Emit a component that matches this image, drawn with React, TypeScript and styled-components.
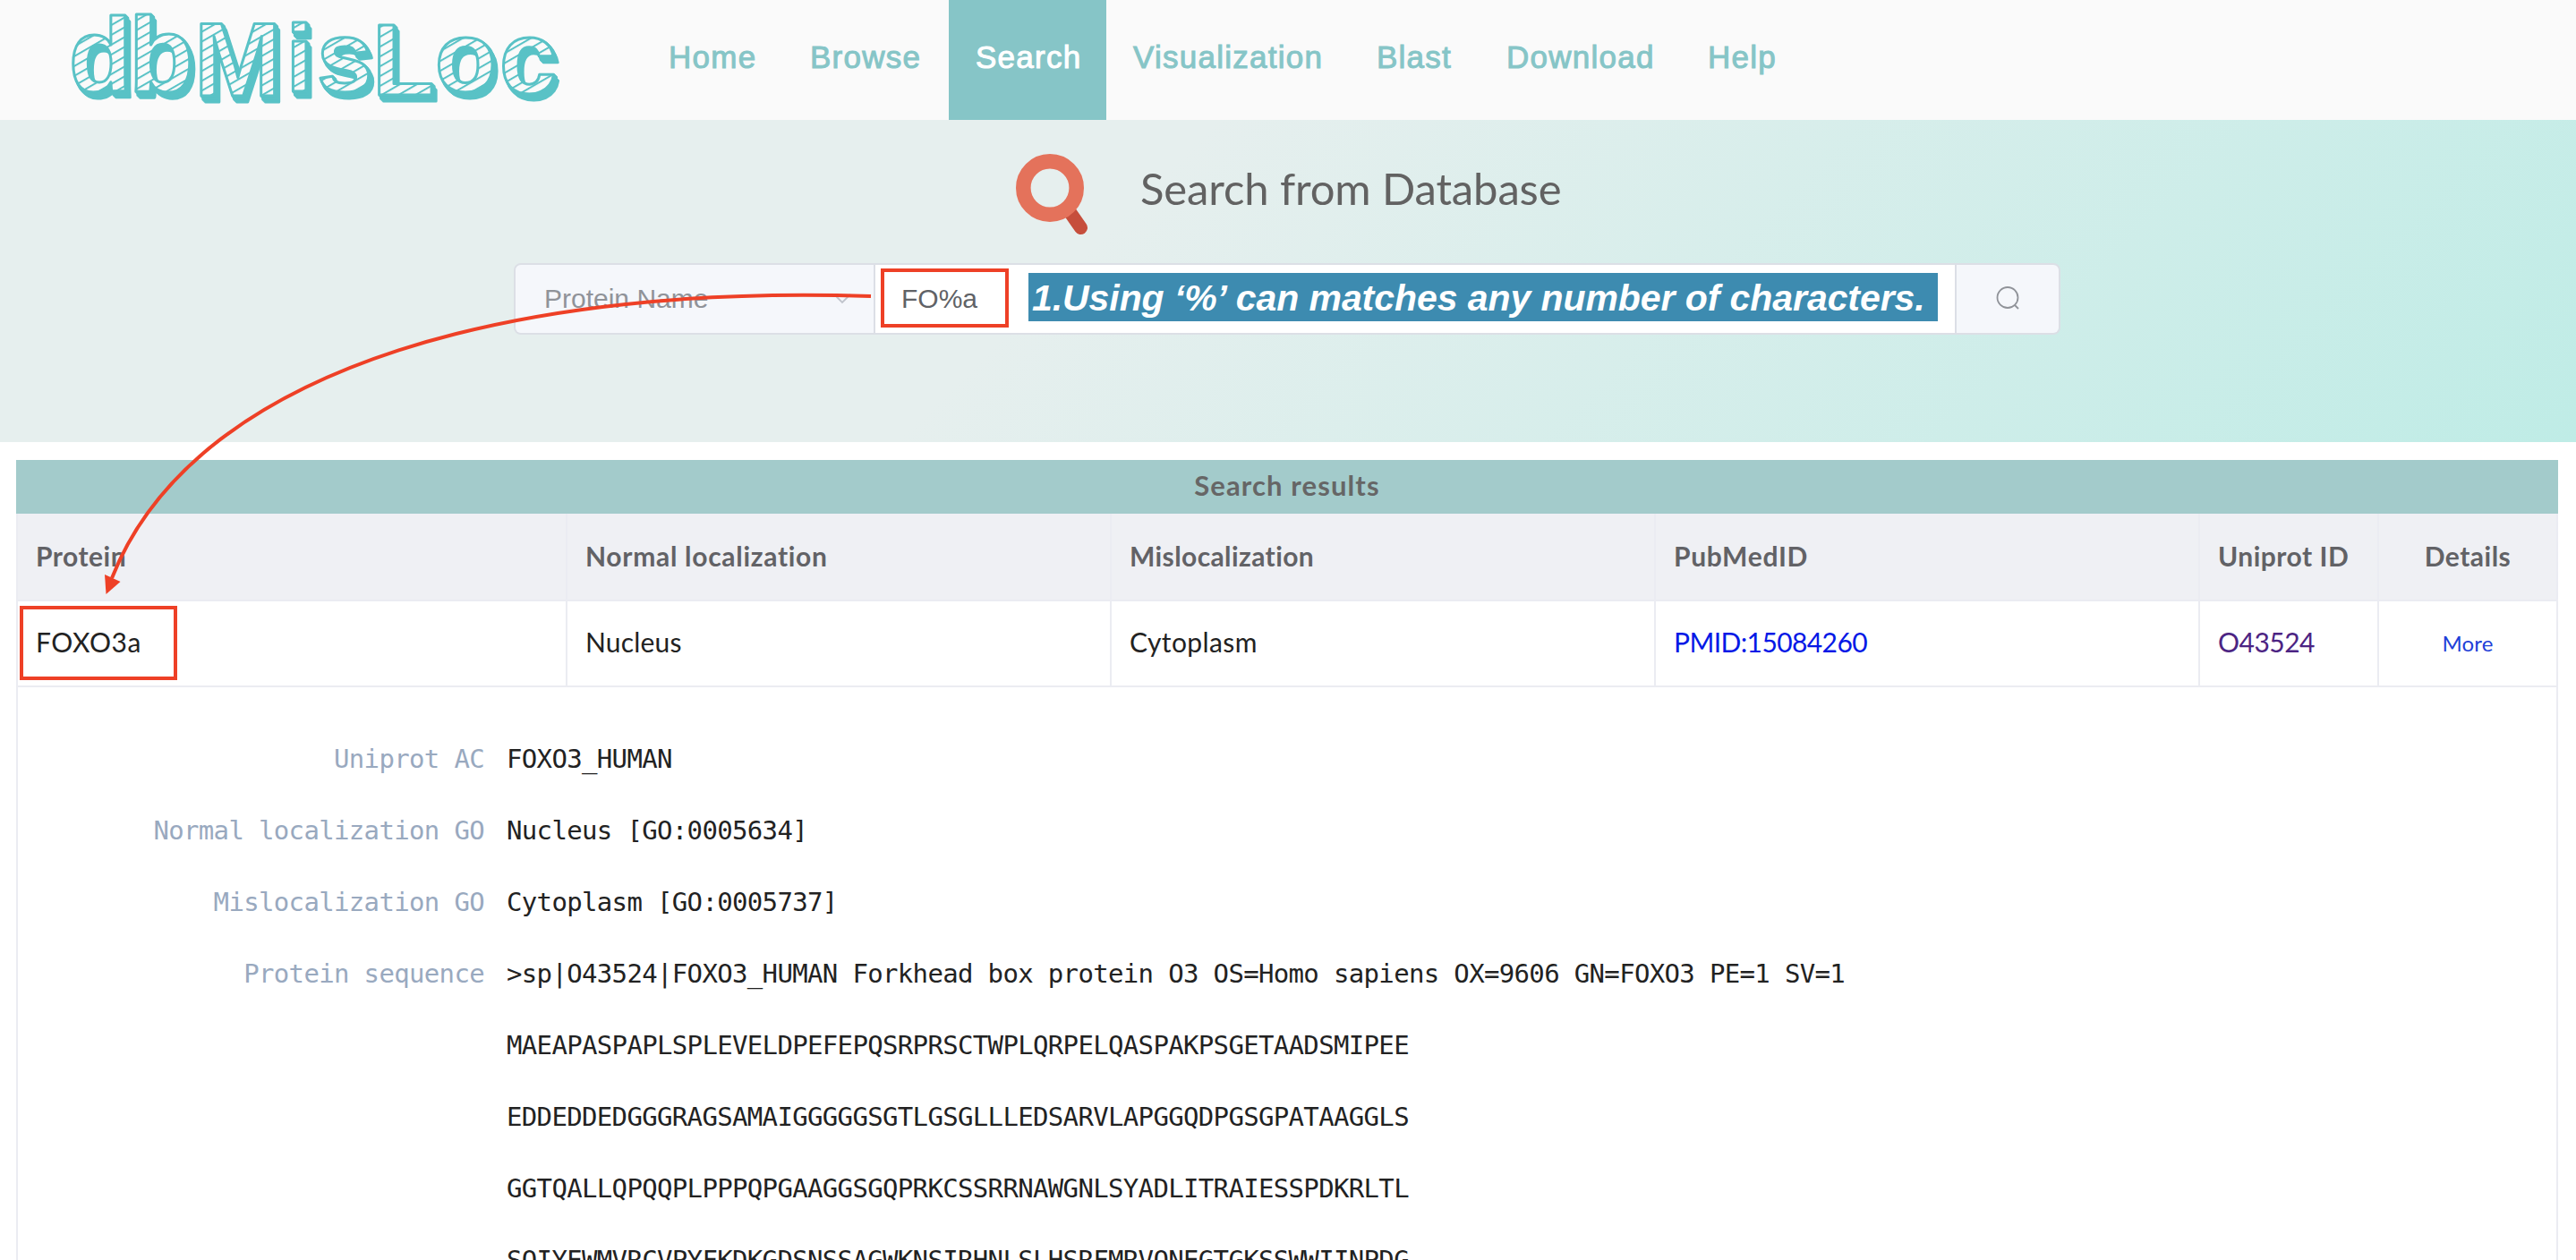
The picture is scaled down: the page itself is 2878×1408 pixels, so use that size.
import React from "react";
import styled, { createGlobalStyle } from "styled-components";

const RED = "#ee4026";
const TEAL = "#59c2c6";
const HUMANIST = 'Lato, "Noto Sans", sans-serif';
const GROTESK = '"Liberation Sans", Arial, sans-serif';
const MONO = '"DejaVu Sans Mono", "Liberation Mono", monospace';

const GlobalStyle = createGlobalStyle`
  * { box-sizing: border-box; }
  html, body { margin: 0; padding: 0; background: #fff; }
  body { overflow: hidden; height: 1408px; }
`;

const Page = styled.div`
  position: relative;
  width: 2878px;
  height: 1408px;
  overflow: hidden;
  font-family: ${HUMANIST};
  background: #fff;
`;

const Header = styled.header`
  display: flex;
  height: 134px;
  background: #fafafa;
`;

const LogoArt = styled.svg`
  display: block;
  flex: none;
  width: 717px;
  height: 134px;
`;

const LogoText = styled.text`
  font-family: ${GROTESK};
  font-weight: 700;
  stroke-linejoin: round;
  filter: drop-shadow(1px 1px 0 ${TEAL}) drop-shadow(2px 2px 0 ${TEAL}) drop-shadow(2px 4px 0 ${TEAL});
`;

const Nav = styled.nav`
  display: flex;
`;

const NavItem = styled.a<{ $width: number; $active?: boolean }>`
  width: ${(p) => p.$width}px;
  height: 134px;
  padding-left: 30px;
  font-family: ${GROTESK};
  font-size: 35px;
  line-height: 128px;
  letter-spacing: 1.25px;
  white-space: nowrap;
  color: ${(p) => (p.$active ? "#fff" : "#86c5c7")};
  background: ${(p) => (p.$active ? "#86c5c7" : "transparent")};
  -webkit-text-stroke: 1px currentColor;
`;

const Hero = styled.section`
  display: flex;
  flex-direction: column;
  align-items: center;
  height: 360px;
  background: linear-gradient(135deg, #e6efee 0%, #e6efee 42%, #bfece6 100%);
`;

const HeroTitle = styled.div`
  display: flex;
  align-items: center;
  width: 608px;
  height: 160px;
`;

const Lens = styled.svg`
  flex: none;
  width: 90px;
  height: 100px;
  margin: 4px 49px 4px 0;
`;

const Title = styled.h1`
  margin: 0 0 8px;
  font-size: 49px;
  font-weight: 400;
  line-height: 60px;
  letter-spacing: -0.12px;
  white-space: nowrap;
  color: #626262;
`;

const SearchBar = styled.div`
  display: flex;
  width: 1728px;
  height: 80px;
  margin-right: 2px;
  border: 2px solid #dcdfe6;
  border-radius: 8px;
  overflow: hidden;
  font-family: ${GROTESK};
  font-size: 30px;
  line-height: 75px;
`;

const Select = styled.div`
  display: flex;
  justify-content: space-between;
  width: 402px;
  padding: 0 25px 0 32px;
  border-right: 2px solid #dcdfe6;
  background: #f5f7fb;
  color: #909399;
`;

const Chevron = styled.svg`
  width: 20px;
  height: 12px;
  margin-top: 32px;
`;

const Field = styled.div`
  display: flex;
  align-items: flex-start;
  flex: 1;
  padding-left: 29px;
  background: #fff;
  color: #606266;
`;

const Query = styled.span`
  width: 142px;
`;

const Hint = styled.span`
  width: 1016px;
  height: 54px;
  margin-top: 9px;
  padding-left: 4px;
  font-size: 41px;
  font-weight: 700;
  font-style: italic;
  line-height: 56px;
  letter-spacing: -0.07px;
  white-space: nowrap;
  color: #fff;
  background: #3d8bb0;
`;

const SearchButton = styled.div`
  display: flex;
  align-items: center;
  justify-content: center;
  width: 116px;
  border-left: 2px solid #dcdfe6;
  background: #f5f7fb;
`;

const Results = styled.section`
  margin: 20px 20px 0 18px;
`;

const Caption = styled.div`
  height: 60px;
  font-size: 31px;
  font-weight: 700;
  line-height: 57px;
  letter-spacing: 1.1px;
  text-align: center;
  color: #666;
  background: #a3cbcb;
`;

const Row = styled.div<{ $head?: boolean }>`
  display: grid;
  grid-template-columns: 614px 608px 608px 608px 200px 200px;
  height: ${(p) => (p.$head ? 98 : 96)}px;
  border-left: 2px solid #ebecf2;
  background: ${(p) => (p.$head ? "#eff0f4" : "#fff")};
  color: ${(p) => (p.$head ? "#626266" : "#222")};
  font-weight: ${(p) => (p.$head ? 700 : 400)};
  line-height: ${(p) => (p.$head ? 95 : 90)}px;
`;

const Cell = styled.div<{ $center?: boolean; $small?: boolean; $color?: string; $spacing?: number }>`
  padding-left: ${(p) => (p.$center ? 0 : 20)}px;
  text-align: ${(p) => (p.$center ? "center" : "left")};
  border-right: 2px solid #ebecf2;
  border-bottom: 2px solid #ebecf2;
  font-size: ${(p) => (p.$small ? 24 : 30)}px;
  ${(p) => p.$small && "line-height: 94px;"}
  letter-spacing: ${(p) => p.$spacing ?? 0.5}px;
  white-space: nowrap;
  color: ${(p) => p.$color ?? "inherit"};
`;

const Details = styled.div`
  height: 640px;
  padding-top: 40px;
  border: solid #ebecf2;
  border-width: 0 2px;
  font-family: ${MONO};
  font-size: 29px;
  line-height: 80px;
  letter-spacing: -0.66px;
  white-space: pre;
`;

const DetailItem = styled.div`
  display: flex;
  gap: 25px;
`;

const Label = styled.div`
  width: 521px;
  text-align: right;
  color: #99a9bf;
`;

const Value = styled.div`
  color: #222;
`;

const Mark = styled.div<{ $x: number; $y: number; $w: number; $h: number }>`
  position: absolute;
  left: ${(p) => p.$x}px;
  top: ${(p) => p.$y}px;
  width: ${(p) => p.$w}px;
  height: ${(p) => p.$h}px;
  border: 4px solid ${RED};
`;

const ArrowLayer = styled.svg`
  position: absolute;
  left: 0;
  top: 0;
  width: 1000px;
  height: 700px;
  pointer-events: none;
`;

const navItems = [
  { label: "Home", width: 158 },
  { label: "Browse", width: 185 },
  { label: "Search", width: 176, active: true },
  { label: "Visualization", width: 272 },
  { label: "Blast", width: 145 },
  { label: "Download", width: 225 },
  { label: "Help", width: 140 },
];

const logoLetters = [
  { ch: "d", x: 77, y: 102, size: 116 },
  { ch: "b", x: 144, y: 102, size: 119 },
  { ch: "M", x: 217, y: 107, size: 117 },
  { ch: "i", x: 320, y: 102, size: 106 },
  { ch: "s", x: 354, y: 102, size: 112 },
  { ch: "L", x: 416, y: 106, size: 114 },
  { ch: "o", x: 486, y: 102, size: 112 },
  { ch: "c", x: 558, y: 104, size: 115 },
];

const sequence = [
  ">sp|O43524|FOXO3_HUMAN Forkhead box protein O3 OS=Homo sapiens OX=9606 GN=FOXO3 PE=1 SV=1",
  "MAEAPASPAPLSPLEVELDPEFEPQSRPRSCTWPLQRPELQASPAKPSGETAADSMIPEE",
  "EDDEDDEDGGGRAGSAMAIGGGGGSGTLGSGLLLEDSARVLAPGGQDPGSGPATAAGGLS",
  "GGTQALLQPQQPLPPPQPGAAGGSGQPRKCSSRRNAWGNLSYADLITRAIESSPDKRLTL",
  "SQIYEWMVRCVPYFKDKGDSNSSAGWKNSIRHNLSLHSRFMRVQNEGTGKSSWWIINPDG",
];

function Logo() {
  return (
    <LogoArt viewBox="0 0 717 134">
      <defs>
        <pattern id="hatch" width="40" height="9.5" patternUnits="userSpaceOnUse" patternTransform="rotate(-30)">
          <rect width="40" height="9.5" fill="#fafafa" />
          <rect width="40" height="2" fill={TEAL} />
        </pattern>
      </defs>
      <LogoText fill="url(#hatch)" stroke={TEAL} strokeWidth="3">
        {logoLetters.map((l) => (
          <tspan key={l.x} x={l.x} y={l.y} fontSize={l.size}>
            {l.ch}
          </tspan>
        ))}
      </LogoText>
    </LogoArt>
  );
}

export default function App() {
  return (
    <Page>
      <GlobalStyle />
      <Header>
        <Logo />
        <Nav>
          {navItems.map((n) => (
            <NavItem key={n.label} $width={n.width} $active={n.active}>
              {n.label}
            </NavItem>
          ))}
        </Nav>
      </Header>

      <Hero>
        <HeroTitle>
          <Lens viewBox="0 0 90 100">
            <path d="M61 74 L72.500 90.500" stroke="#c64e3c" strokeWidth="15" strokeLinecap="round" />
            <circle cx="38" cy="46" r="29.7" fill="none" stroke="#e4725b" strokeWidth="16.6" />
          </Lens>
          <Title>Search from Database</Title>
        </HeroTitle>
        <SearchBar>
          <Select>
            Protein Name
            <Chevron viewBox="0 0 20 12">
              <path d="M1 1 L10 10 L19 1" fill="none" stroke="#c0c4cc" strokeWidth="1.8" />
            </Chevron>
          </Select>
          <Field>
            <Query>FO%a</Query>
            <Hint>1.Using ‘%’ can matches any number of characters.</Hint>
          </Field>
          <SearchButton>
            <svg width="28" height="28" viewBox="0 0 28 28" fill="none" stroke="#909399" strokeWidth="1.8">
              <circle cx="14" cy="12.500" r="11.5" />
              <path d="M22 21 L26 25" />
            </svg>
          </SearchButton>
        </SearchBar>
      </Hero>

      <Results>
        <Caption>Search results</Caption>
        <Row $head>
          <Cell>Protein</Cell>
          <Cell $spacing={0.7}>Normal localization</Cell>
          <Cell $spacing={0.4}>Mislocalization</Cell>
          <Cell $spacing={0.7}>PubMedID</Cell>
          <Cell>Uniprot ID</Cell>
          <Cell $center>Details</Cell>
        </Row>
        <Row>
          <Cell>FOXO3a</Cell>
          <Cell $spacing={0.2}>Nucleus</Cell>
          <Cell $spacing={0.4}>Cytoplasm</Cell>
          <Cell $spacing={-0.6} $color="#0519e6">PMID:15084260</Cell>
          <Cell $spacing={-0.5} $color="#4c2483">O43524</Cell>
          <Cell $center $small $spacing={0.1} $color="#1f3fd8">More</Cell>
        </Row>
        <Details>
          <DetailItem>
            <Label>Uniprot AC</Label>
            <Value>FOXO3_HUMAN</Value>
          </DetailItem>
          <DetailItem>
            <Label>Normal localization GO</Label>
            <Value>Nucleus [GO:0005634]</Value>
          </DetailItem>
          <DetailItem>
            <Label>Mislocalization GO</Label>
            <Value>Cytoplasm [GO:0005737]</Value>
          </DetailItem>
          <DetailItem>
            <Label>Protein sequence</Label>
            <Value>
              {sequence.map((line) => (
                <div key={line}>{line}</div>
              ))}
            </Value>
          </DetailItem>
        </Details>
      </Results>

      <Mark $x={984} $y={300} $w={143} $h={66} />
      <Mark $x={22} $y={677} $w={176} $h={83} />
      <ArrowLayer viewBox="0 0 1000 700">
        <path d="M973 331 C600 318 222 400 125 646" fill="none" stroke={RED} strokeWidth="4" />
        <path d="M118.500 664 L117 642 L134.500 650 Z" fill={RED} />
      </ArrowLayer>
    </Page>
  );
}
